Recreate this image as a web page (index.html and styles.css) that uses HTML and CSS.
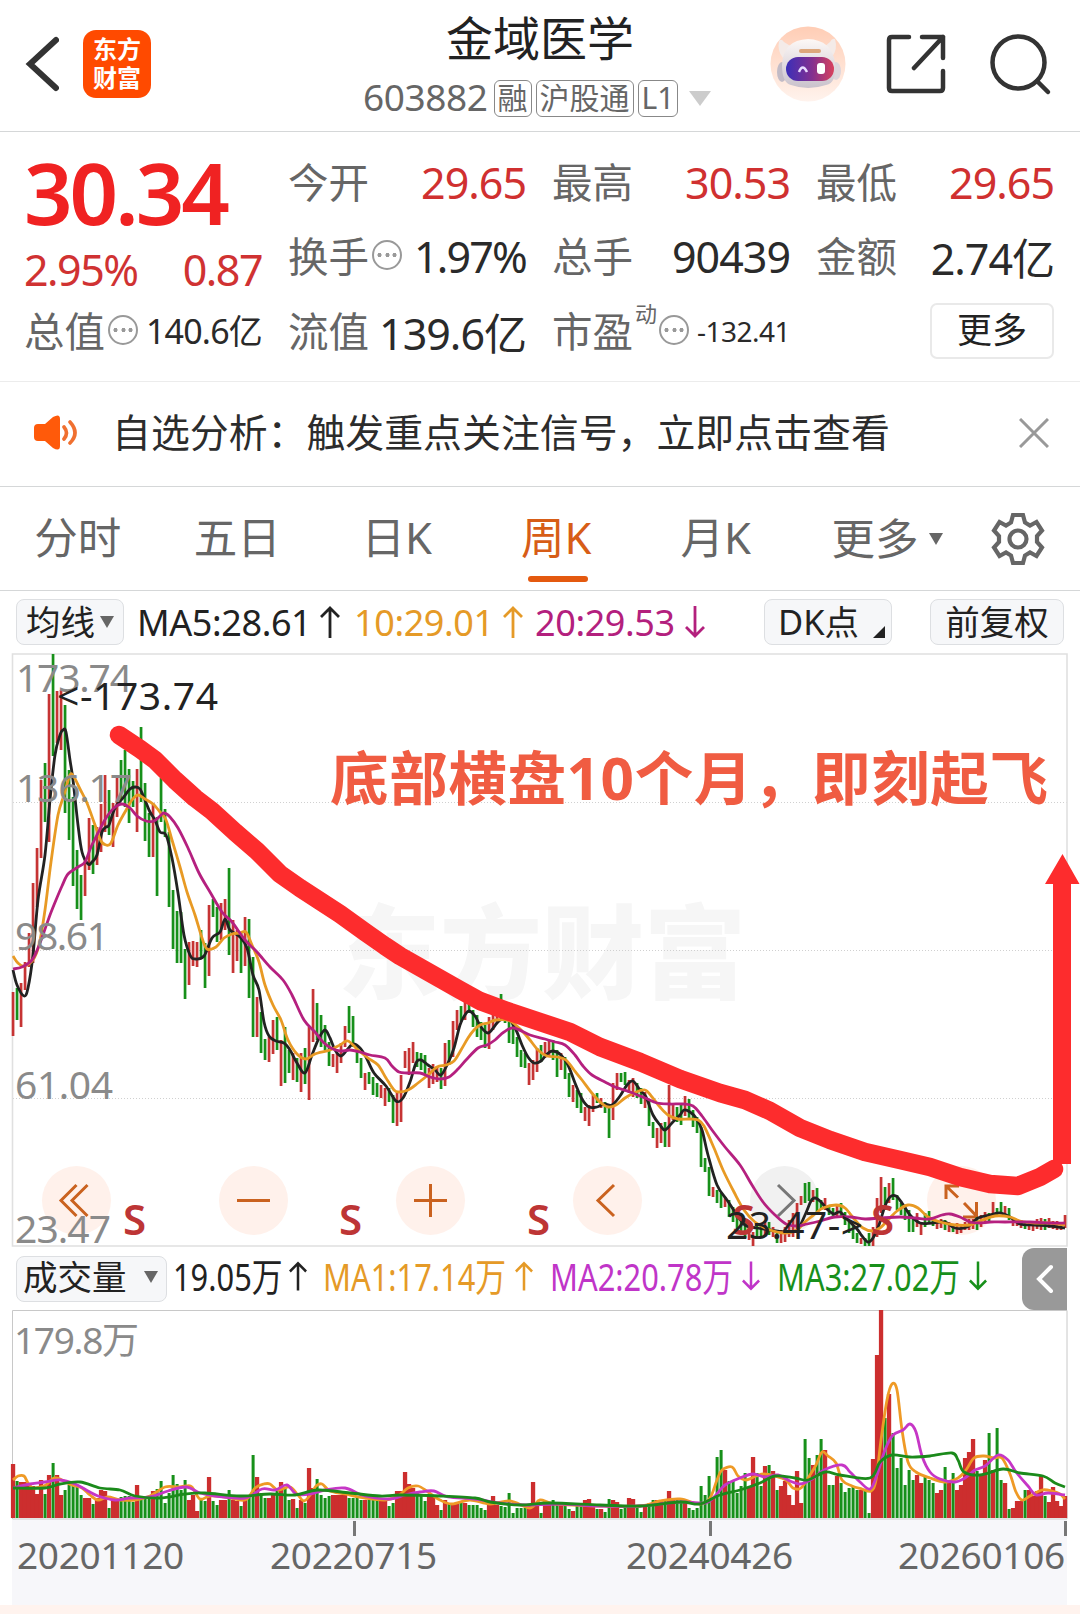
FILE: index.html
```html
<!DOCTYPE html>
<html lang="zh-CN">
	<head>
		<meta charset="utf-8">
		<title>金域医学 603882</title>
		<meta name="viewport" content="width=device-width, initial-scale=1">
		<link rel="stylesheet" href="styles.css">
	</head>
	<body>
		<header id="topbar">
			<div class="top_left">
				<svg class="back" width="34" height="56" viewBox="0 0 34 56"><path d="M31 4 L5 28 L31 52"/></svg>
				<div class="logo">东方<br>财富</div>
			</div>
			<div class="top_title">
				<h1>金域医学</h1>
				<div class="sub">
					<span class="code">603882</span>
					<span class="tag">融</span>
					<span class="tag wide">沪股通</span>
					<span class="tag">L1</span>
					<i class="tri big"></i>
				</div>
			</div>
			<div class="top_right">
				<svg width="76" height="78" viewBox="0 0 76 78">
					<defs>
						<linearGradient id="halo" x1="0" y1="0" x2="0" y2="1"><stop offset="0" stop-color="#ffcdb5"/><stop offset="1" stop-color="#fff3ed"/></linearGradient>
						<linearGradient id="visor" x1="0" y1="0" x2="1" y2="0"><stop offset="0" stop-color="#3b2fb8"/><stop offset=".55" stop-color="#84308f"/><stop offset="1" stop-color="#d8405c"/></linearGradient>
						<linearGradient id="shell" x1="0" y1="0" x2="0" y2="1"><stop offset="0" stop-color="#fdf8f6"/><stop offset="1" stop-color="#c9c2cc"/></linearGradient>
					</defs>
					<circle cx="38" cy="39" r="37.5" fill="url(#halo)"/>
					<path d="M9 16 Q11 13 14 17 L22 22 L13 33 Q7 26 9 16Z M65 14 Q62 13 60 17 L54 22 L62 32 Q68 24 65 14Z" fill="#f4ebe8"/>
					<ellipse cx="12" cy="47" rx="5" ry="10" fill="#c2bbc6"/>
					<ellipse cx="66" cy="46" rx="5" ry="9" fill="#ddd5db"/>
					<path d="M12 40 Q13 15 38 14 Q62 15 65 38 Q67 58 56 60 Q38 66 21 60 Q12 58 12 40Z" fill="url(#shell)"/>
					<rect x="29" y="24" width="22" height="4" rx="2" fill="#dda77c"/>
					<rect x="16" y="32" width="48" height="24" rx="12" fill="url(#visor)"/>
					<path d="M29 47 Q32.500 38 37 47" fill="none" stroke="#e8dcff" stroke-width="2.5"/>
					<rect x="47" y="38" width="8" height="11" rx="3" fill="#fff"/>
				</svg>
				<svg class="line_icon" width="60" height="60" viewBox="0 0 60 60"><path d="M23 3 H6 Q3 3 3 6 V54 Q3 57 6 57 H54 Q57 57 57 54 V37 M36 3 H57 V24 M57 3 L28 34"/></svg>
				<svg class="line_icon find" width="62" height="62" viewBox="0 0 62 62"><circle cx="28.5" cy="28.500" r="26"/><path d="M47 47 L58 58"/></svg>
			</div>
		</header>

		<section id="quote">
			<div class="col main">
				<div class="price">30.34</div>
				<div class="change"><span>2.95%</span><span>0.87</span></div>
				<div class="row"><label>总值</label><i class="info"></i><b class="small">140.6亿</b></div>
			</div>
			<div class="col">
				<div class="row"><label>今开</label><b class="up">29.65</b></div>
				<div class="row"><label>换手</label><i class="info"></i><b class="rate">1.97%</b></div>
				<div class="row"><label>流值</label><b>139.6亿</b></div>
			</div>
			<div class="col">
				<div class="row"><label>最高</label><b class="up">30.53</b></div>
				<div class="row"><label>总手</label><b>90439</b></div>
				<div class="row"><label>市盈</label><sup>动</sup><i class="info"></i><b class="tiny">-132.41</b></div>
			</div>
			<div class="col">
				<div class="row"><label>最低</label><b class="up">29.65</b></div>
				<div class="row"><label>金额</label><b>2.74亿</b></div>
				<div class="row"><span class="more">更多</span></div>
			</div>
		</section>

		<section id="notice">
			<svg width="46" height="36" viewBox="0 0 46 36">
				<path d="M1 13 Q1 9 5 9 H12 L20 2 Q27 -2 27 4 V31 Q27 37 20 33 L12 26 H5 Q1 26 1 22Z" fill="#ff5a0a"/>
				<path d="M31 12 Q36 18 31 24 M37 7 Q47 18 37 28" fill="none" stroke="#f07030" stroke-width="3.6" stroke-linecap="round"/>
			</svg>
			<p>自选分析：触发重点关注信号，立即点击查看</p>
			<svg class="close" width="30" height="30" viewBox="0 0 30 30"><path d="M1 1 L29 29 M29 1 L1 29"/></svg>
		</section>

		<nav id="tabs">
			<a>分时</a>
			<a>五日</a>
			<a>日K</a>
			<a class="on">周K</a>
			<a>月K</a>
			<a class="drop">更多<i class="tri"></i></a>
			<svg width="54" height="54" viewBox="-27 -27 54 54"><path d="M-5 -24 H5 L7 -16.500 L12 -13.500 L18.500 -17 L24 -8.500 L19 -3 V3 L24 8.500 L18.500 17 L12 13.500 L7 16.500 L5 24 H-5 L-7 16.500 L-12 13.500 L-18.500 17 L-24 8.500 L-19 3 V-3 L-24 -8.500 L-18.500 -17 L-12 -13.500 L-7 -16.500 Z"/><circle r="8.500"/></svg>
		</nav>

		<div id="ma_bar" class="bar">
			<span class="btn">均线<i class="tri"></i></span>
			<span class="val m1">MA5:28.61<svg class="arr" viewBox="0 0 20 32"><path d="M10 32 V2 M1 11 L10 2 L19 11"/></svg></span>
			<span class="val m2">10:29.01<svg class="arr" viewBox="0 0 20 32"><path d="M10 32 V2 M1 11 L10 2 L19 11"/></svg></span>
			<span class="val m3">20:29.53<svg class="arr" viewBox="0 0 20 32"><path d="M10 0 V30 M1 21 L10 30 L19 21"/></svg></span>
			<span class="btn dk">DK点<i class="corner"></i></span>
			<span class="btn fq">前复权</span>
		</div>

		<svg id="kline" width="1080" height="594" viewBox="0 653 1080 594">
			<text class="mark" x="338" y="991" textLength="408">东方财富</text>
			<path class="grid" d="M13 802.500 H1067 M13 950.500 H1067 M13 1098.500 H1067"/>
			<path class="frame" d="M12.500 654 H1067 V1246 H12.500 Z"/>
			<g class="pads">
				<circle cx="76.500" cy="1200.500" r="34.500"/>
				<circle cx="253.500" cy="1200.500" r="34.500"/>
				<circle cx="430.500" cy="1200.500" r="34.500"/>
				<circle cx="607.500" cy="1200.500" r="34.500"/>
				<circle class="off" cx="784.500" cy="1200.500" r="34.500"/>
				<circle cx="961.500" cy="1200.500" r="34.500"/>
				<path d="M76.500 1185 L61 1200.500 L76.500 1216 M87.500 1185 L72 1200.500 L87.500 1216"/>
				<path d="M237 1200.500 H270 M414 1200.500 H447 M430.500 1184 V1217"/>
				<path d="M614 1185 L598 1200.500 L614 1216"/>
				<path class="off" d="M778 1185 L794 1200.500 L778 1216"/>
				<path d="M946 1199 V1186 H959 M946 1186 L958 1197.500 M964 1203 L976.500 1216 M976.500 1202 V1217 H963"/>
			</g>
			<g id="candles"></g>
			<g id="ma_lines"></g>
			<g class="scale">
				<text x="16" y="692" textLength="116">173.74</text>
				<text x="16" y="802" textLength="116">136.17</text>
				<text x="15" y="950" textLength="94">98.61</text>
				<text x="15" y="1099" textLength="98">61.04</text>
				<text x="15" y="1243" textLength="96">23.47</text>
			</g>
			<g class="sell">
				<text x="123" y="1235">S</text>
				<text x="339" y="1235">S</text>
				<text x="527" y="1235">S</text>
				<text x="732" y="1235">S</text>
				<text x="871" y="1235">S</text>
			</g>
			<text class="peak" x="57" y="710" textLength="161">&lt;-173.74</text>
			<text class="peak" x="726" y="1239" textLength="137">23.47-&gt;</text>
			<text class="slogan" x="330" y="800" textLength="718">底部横盘10个月，即刻起飞</text>
			<path class="brush" d="M119 735 L140 749 L155 760 L175 780 L195 798 L212 811 L235 832 L257 851 L280 874 L300 888 L320 901 L340 914 L365 932 L385 946 L400 956 L430 973 L460 990 L480 1001 L510 1012 L540 1022 L570 1032 L600 1047 L640 1062 L680 1079 L720 1093 L745 1100 L770 1111 L800 1128 L830 1140 L865 1152 L900 1160 L930 1167 L960 1177 L990 1184 L1018 1186 L1040 1177 L1054 1169"/>
			<path class="arrow" d="M1062.500 854 L1079.500 884 H1071 V1164 H1053 V884 H1045 Z"/>
		</svg>

		<div id="vol_bar" class="bar">
			<span class="btn">成交量<i class="tri"></i></span>
			<span class="val m1"><em>19.05万</em><svg class="arr" viewBox="0 0 20 32"><path d="M10 32 V2 M1 11 L10 2 L19 11"/></svg></span>
			<span class="val m2"><em>MA1:17.14万</em><svg class="arr" viewBox="0 0 20 32"><path d="M10 32 V2 M1 11 L10 2 L19 11"/></svg></span>
			<span class="val m4"><em>MA2:20.78万</em><svg class="arr" viewBox="0 0 20 32"><path d="M10 0 V30 M1 21 L10 30 L19 21"/></svg></span>
			<span class="val m5"><em>MA3:27.02万</em><svg class="arr" viewBox="0 0 20 32"><path d="M10 0 V30 M1 21 L10 30 L19 21"/></svg></span>
			<span class="fold"><svg width="18" height="30" viewBox="0 0 18 30"><path d="M15 3 L3 15 L15 27"/></svg></span>
		</div>

		<svg id="volume" width="1080" height="210" viewBox="0 1310 1080 210">
			<path class="frame dark" d="M12.500 1310.500 H1067 V1519 H12.500 Z"/>
			<text class="vmax" x="14" y="1354" textLength="125">179.8万</text>
			<g id="vbars"></g>
			<g id="vlines"></g>
		</svg>

		<footer id="dates">
			<span>20201120</span>
			<span>20220715</span>
			<span>20240426</span>
			<span>20260106</span>
		</footer>
		<div id="strip"></div>
		<script src="chart.js"></script>
	</body>
</html>
```
FILE: styles.css
```css
* {
	box-sizing: border-box;
}
body {
	margin: 0;
	width: 1080px;
	height: 1614px;
	overflow: hidden;
	background: #fff;
	color: #222;
	font-family: "Noto Sans", "Noto Sans CJK SC", sans-serif;
}
svg {
	display: block;
	flex: none;
}
i, em {
	font-style: normal;
}
.tri {
	border: 7px solid transparent;
	border-top: 12px solid #666;
	border-bottom: 0;
}
.tri.big {
	border-width: 15px 11px 0;
	border-top-color: #ccc;
}

/* header */
#topbar {
	height: 132px;
	border-bottom: 1px solid #d5d7d8;
	display: grid;
	grid-template-columns: 330px 1fr 330px;
}
.top_left {
	display: flex;
	align-items: flex-start;
	padding: 30px 0 0 25px;
}
.back {
	margin: 6px 24px 0 0;
}
.back path {
	fill: none;
	stroke: #333;
	stroke-width: 6;
	stroke-linecap: round;
}
.logo {
	width: 68px;
	height: 68px;
	border-radius: 13px;
	background: #ff4a00;
	color: #fff;
	font-size: 24px;
	font-weight: bold;
	line-height: 29px;
	text-align: center;
	padding-top: 4px;
}
h1 {
	margin: 0;
	font-size: 47px;
	font-weight: normal;
	line-height: 76px;
	text-align: center;
}
.sub {
	display: flex;
	align-items: center;
	height: 38px;
	margin: 3px 0 0 33px;
	color: #666;
}
.code {
	font-size: 37px;
	letter-spacing: -0.4px;
	line-height: 36px;
	margin: -2px 6px 0 0;
}
.tag {
	height: 37px;
	padding: 0 3px;
	margin-right: 4px;
	border: 1px solid #888;
	border-radius: 6px;
	font-size: 30px;
	line-height: 33px;
}
.sub .tri {
	margin-left: 7px;
}
.top_right {
	display: flex;
	align-items: flex-start;
	padding-top: 25px;
}
.top_right svg:first-child {
	margin-left: 20px;
}
.line_icon {
	fill: none;
	stroke: #333;
	stroke-width: 4.500;
	stroke-linecap: round;
	stroke-linejoin: round;
	margin: 9px 0 0 40px;
}
.find {
	margin-left: 44px;
}

/* quote */
#quote {
	height: 250px;
	border-bottom: 1px solid #ececec;
	display: grid;
	grid-template-columns: repeat(4, 238px);
	column-gap: 26px;
	padding: 13px 0 0 24px;
}
.row {
	display: flex;
	align-items: center;
	height: 74.500px;
	white-space: nowrap;
}
.price {
	height: 93px;
	font-size: 85px;
	font-weight: 600;
	line-height: 94px;
	letter-spacing: -3px;
	color: #f02222;
}
.change {
	display: flex;
	justify-content: space-between;
	height: 56px;
	line-height: 63px;
	font-size: 43px;
	letter-spacing: -1.500px;
	color: #d03232;
}
label {
	font-size: 40.500px;
	color: #666;
	margin-top: -4px;
}
.row b {
	margin-left: auto;
	font-weight: normal;
	font-size: 43px;
	letter-spacing: -1px;
	color: #2a2a2a;
}
.row b.up {
	color: #d03030;
}
.row b.rate {
	letter-spacing: -1.800px;
}
.row b.small {
	font-size: 34px;
	letter-spacing: -0.800px;
	margin-top: -3px;
}
.row b.tiny {
	font-size: 28px;
	letter-spacing: -0.500px;
}
.info {
	width: 30px;
	height: 30px;
	margin: -3px 0 0 3px;
	border: 2px solid #999;
	border-radius: 50%;
	background: radial-gradient(circle, #999 1.800px, transparent 2.300px) center / 7px 26px no-repeat,
		radial-gradient(circle, #999 1.800px, transparent 2.300px) 2px center / 7px 26px no-repeat,
		radial-gradient(circle, #999 1.800px, transparent 2.300px) 17px center / 7px 26px no-repeat;
}
sup {
	font-size: 22px;
	color: #666;
	margin: -38px -1px 0 2px;
}
.more {
	margin-left: auto;
	width: 124px;
	height: 56px;
	border: 2px solid #e9e9e9;
	border-radius: 7px;
	font-size: 35px;
	line-height: 50px;
	text-align: center;
}

/* notice */
#notice {
	height: 105px;
	border-bottom: 1px solid #d5d7d8;
	display: flex;
	align-items: center;
	padding: 0 31px 0 33px;
}
#notice > svg:first-child {
	margin-bottom: 2px;
}
#notice p {
	flex: 1;
	margin: 0 0 8px 33px;
	font-size: 38.900px;
	color: #2c2c2c;
}
.close {
	fill: none;
	stroke: #999;
	stroke-width: 3;
	margin-bottom: 2px;
}

/* period tabs */
#tabs {
	height: 104px;
	border-bottom: 1px solid #d5d7d8;
	display: grid;
	grid-template-columns: repeat(5, 159.500px) 193px 54px;
	align-items: center;
	margin-left: -2px;
}
#tabs a {
	position: relative;
	height: 103px;
	line-height: 101px;
	font-size: 43.500px;
	color: #666;
	text-align: center;
}
#tabs .on {
	color: #d75d17;
}
#tabs .on:after {
	content: "";
	position: absolute;
	left: 51px;
	bottom: 8px;
	width: 60px;
	height: 6px;
	border-radius: 3px;
	background: #e4590f;
}
#tabs .drop {
	display: flex;
	align-items: center;
	padding-left: 36px;
}
.drop .tri {
	margin-left: 10px;
}
#tabs svg {
	margin-left: 2px;
	fill: none;
	stroke: #666;
	stroke-width: 4.200;
}

/* indicator rows */
.bar {
	display: flex;
	align-items: center;
	height: 62px;
	padding-left: 16px;
	white-space: nowrap;
}
.btn {
	display: flex;
	align-items: center;
	height: 46px;
	padding: 0 9px;
	border: 1px solid #dddfe2;
	border-radius: 8px;
	background: #f6f7f9;
	font-size: 34.500px;
	line-height: 40px;
}
.btn .tri {
	margin-left: 5px;
}
.val {
	display: flex;
	align-items: center;
	font-size: 36px;
	letter-spacing: -0.400px;
}
.arr {
	width: 20px;
	height: 32px;
	margin-left: auto;
	fill: none;
	stroke: currentColor;
	stroke-width: 2.800;
}
.m1 { color: #222; }
.m2 { color: #e59a27; }
.m3 { color: #b3207d; }
.m4 { color: #c035c8; }
.m5 { color: #18901b; }
#ma_bar .m1 { width: 203px; margin-left: 13px; }
#ma_bar .m2 { width: 169px; margin-left: 14px; }
#ma_bar .m3 { width: 170px; margin-left: 12px; }
.dk {
	width: 128px;
	margin-left: 59px;
	padding: 0 6px 0 13px;
	justify-content: space-between;
}
.corner {
	align-self: flex-end;
	margin-bottom: 6px;
	border-left: 12px solid transparent;
	border-bottom: 12px solid #222;
}
.fq {
	margin-left: 38px;
	width: 134px;
	justify-content: center;
}

/* price chart */
#kline {
	font-size: 39px;
}
.frame {
	fill: none;
	stroke: #e0e0e0;
	stroke-width: 1.600;
}
.frame.dark {
	stroke: #c8c8c8;
	stroke-width: 1;
}
.grid {
	stroke: #d0d0d0;
	stroke-dasharray: 1 2;
}
.mark {
	font-size: 102px;
	font-weight: 900;
	fill: #f6f6f6;
}
.pads circle {
	fill: #fff1eb;
}
.pads circle.off {
	fill: #f1f1f1;
}
.pads path {
	fill: none;
	stroke: #ca621f;
	stroke-width: 3;
}
.pads path.off {
	stroke: #777;
}
.scale, .vmax {
	fill: #8a8a8a;
}
.peak {
	fill: #222;
}
.sell {
	font-size: 42px;
	font-weight: 600;
	fill: #bd3535;
}
.slogan {
	font-size: 58.500px;
	font-weight: bold;
	fill: #f05c42;
}
.brush {
	fill: none;
	stroke: #fd2c2d;
	stroke-width: 18.500;
	stroke-linecap: round;
	stroke-linejoin: round;
}
.arrow {
	fill: #fd2c2d;
}
#kline .line, #volume .line {
	fill: none;
	stroke-width: 2.800;
}

/* volume */
#vol_bar {
	height: 63px;
	padding-right: 13px;
}
#vol_bar .btn {
	width: 151px;
	padding: 0 8px 3px 6px;
	justify-content: space-between;
}
#vol_bar .val {
	font-size: 39px;
	letter-spacing: 0;
	line-height: 56px;
	padding-bottom: 5px;
}
#vol_bar em {
	width: 0;
	transform: scaleX(.79);
	transform-origin: 0 50%;
}
#vol_bar .arr { width: 18px; }
#vol_bar .m1 { width: 134px; margin-left: 6px; }
#vol_bar .m2 { width: 210px; margin-left: 16px; }
#vol_bar .m4 { width: 210px; margin-left: 17px; }
#vol_bar .m5 { width: 210px; margin-left: 17px; }
.fold {
	width: 45px;
	height: 62px;
	margin-left: auto;
	display: flex;
	align-items: center;
	justify-content: center;
	background: #999;
	border-radius: 12px 0 0 12px;
}
.fold path {
	fill: none;
	stroke: #fff;
	stroke-width: 4;
	stroke-linecap: round;
}
.vmax {
	font-size: 37px;
}

/* date axis */
#dates {
	display: grid;
	grid-template-columns: 253px 356px 1fr 169px;
	margin: 0 13px 0 12px;
	height: 85px;
	background:
		linear-gradient(#777, #777) 341px 1px / 3px 15px no-repeat,
		linear-gradient(#777, #777) 697px 1px / 3px 15px no-repeat,
		linear-gradient(#777, #777) 1052px 1px / 3px 15px no-repeat,
		#f7f7fa;
	color: #666;
	font-size: 37px;
	letter-spacing: -0.300px;
	line-height: 70px;
	padding-left: 5px;
}
#strip {
	height: 9px;
	background: #fff3ee;
}
```
FILE: chart.js
```js
var NS = "http://www.w3.org/2000/svg";
var RED = "#c63434", GREEN = "#17901a";

// one entry per week: direction, top, bottom
var candles = "R992-1036 G988-1020 R983-1027 R962-990 R933-967 R883-963 R848-907 R780-858 G763-822 R694-842 G654-756 R691-743 R690-750 G705-813 G770-840 G797-886 G850-909 G875-920 R858-896 R818-870 " +
	"G825-874 R827-865 R804-852 R775-832 G790-835 R803-847 R776-817 G760-800 G750-807 G769-823 G781-807 R769-832 G727-802 G783-841 G813-857 R803-857 G817-896 G778-822 G809-837 G832-907 " +
	"G890-949 G911-963 G912-963 G949-999 R942-985 R941-966 R942-967 G930-958 G943-988 R905-976 G899-917 G907-942 R903-940 R899-930 G868-955 R920-973 R930-961 G933-973 R917-966 G919-998 " +
	"G957-1037 R997-1037 G1012-1053 G1039-1060 R1037-1062 R1020-1054 G1017-1050 R1040-1086 G1027-1083 G1050-1073 R1053-1080 G1058-1082 R1053-1092 G1048-1084 R1027-1100 R989-1042 G1003-1040 G1015-1047 G1025-1050 G1042-1066 " +
	"R1054-1067 R1053-1073 R1043-1063 R1026-1047 G1006-1033 G1016-1047 G1045-1063 G1058-1078 R1073-1090 G1072-1084 G1077-1095 G1083-1097 R1085-1098 R1088-1106 G1088-1102 G1095-1123 R1092-1126 R1075-1122 R1051-1068 R1048-1075 " +
	"R1042-1063 G1052-1067 G1053-1070 G1055-1075 R1068-1088 R1064-1084 R1066-1082 G1068-1089 R1043-1086 G1040-1065 R1021-1057 R1010-1030 G1006-1022 R1000-1020 G987-1013 G1010-1027 G1015-1037 G1022-1040 G1025-1048 R1017-1049 " +
	"R1013-1030 R1007-1023 G994-1020 G1003-1023 G1005-1043 G1023-1044 G1037-1057 G1050-1067 G1053-1068 R1063-1085 R1060-1080 R1048-1072 G1045-1062 R1042-1058 R1041-1057 G1040-1060 G1050-1077 R1053-1070 G1057-1079 G1073-1097 " +
	"R1085-1102 G1090-1108 G1093-1113 R1107-1121 R1105-1126 R1095-1112 G1093-1103 R1098-1108 G1102-1113 G1107-1138 R1083-1120 R1073-1090 G1073-1082 G1072-1085 R1080-1093 R1078-1097 G1083-1098 G1088-1104 R1092-1108 G1100-1126 " +
	"G1122-1138 R1128-1148 R1123-1143 G1122-1147 R1085-1147 R1105-1120 G1107-1122 G1105-1125 R1096-1116 G1099-1118 G1110-1127 G1117-1133 G1127-1167 G1158-1172 G1167-1196 R1187-1197 G1190-1203 G1193-1208 R1197-1207 G1200-1217 " +
	"G1207-1222 G1212-1230 G1217-1233 G1222-1238 R1227-1240 R1232-1246 G1225-1238 G1223-1237 R1222-1235 G1222-1235 R1227-1237 G1230-1243 R1230-1243 R1227-1242 R1220-1237 R1213-1237 R1203-1230 R1196-1205 G1183-1203 G1182-1201 " +
	"R1190-1202 G1188-1213 G1200-1210 R1198-1210 G1207-1215 G1208-1218 R1205-1217 G1203-1217 G1212-1225 G1220-1233 G1225-1239 G1233-1243 R1238-1244 G1238-1246 G1233-1246 R1227-1246 R1198-1237 R1177-1213 G1187-1210 R1183-1203 " +
	"G1178-1200 G1195-1210 G1203-1215 G1207-1220 G1210-1232 G1217-1232 R1213-1227 R1222-1235 G1213-1227 G1211-1223 G1218-1226 R1220-1229 R1219-1228 G1220-1230 R1222-1232 G1224-1232 R1223-1234 R1225-1233 R1222-1230 R1219-1230 " +
	"R1219-1229 G1217-1230 R1215-1227 R1212-1222 G1213-1222 R1202-1217 G1208-1217 G1202-1213 R1206-1216 G1208-1220 R1218-1226 R1219-1226 R1220-1228 G1221-1229 R1222-1230 R1222-1231 R1219-1229 R1218-1230 G1219-1230 R1218-1228 " +
	"R1221-1229 R1221-1230 R1222-1230 R1215-1228";

var vols = [54,37,36,36,32,32,24,38,24,43,55,43,23,28,33,33,32,23,20,20,14,20,28,27,10,18,18,21,22,22,16,33,20,20,20,27,29,37,15,25,
	43,34,28,38,18,23,7,18,17,41,17,13,18,18,28,18,17,12,18,22,63,41,25,20,20,25,27,36,30,18,19,10,18,15,50,30,39,23,20,22,
	23,23,23,23,20,20,22,18,18,18,18,18,18,18,12,15,27,27,46,34,30,25,23,17,22,22,13,8,18,15,15,15,15,15,13,13,13,10,8,13,
	22,13,12,11,25,5,10,10,10,12,36,12,5,13,14,18,16,16,16,9,7,13,13,18,19,13,9,9,6,19,18,16,9,10,20,19,10,6,12,15,
	18,18,17,18,27,18,19,18,15,10,8,10,32,23,42,20,61,68,48,37,37,25,32,45,30,61,45,32,52,53,47,28,32,37,23,13,47,15,79,60,
	53,63,79,68,33,33,42,35,26,30,31,28,28,27,5,59,163,208,100,124,85,50,60,33,48,38,43,35,41,38,35,25,28,51,37,45,28,33,60,66,
	79,47,42,58,85,48,90,38,35,9,10,17,17,28,28,22,27,42,22,16,31,17,12,22];

var ma5 = "13,970 17,985 24,996 28,988 33,955 38,900 45,855 50,800 55,755 60,735 63,730 66,732 70,760 73,780 78,825 82,852 88,864 92,862 97,855 102,832 106,827 109,825 115,808 123,798 130,789 135,787 140,789 145,800 150,812 155,820 160,832 166,835 172,858 178,893 184,935 190,955 195,959 204,956 212,938 220,932 225,919 230,930 240,937 247,948 253,975 259,990 264,1022 269,1036 276,1041 284,1043 290,1050 297,1063 305,1073 312,1055 319,1038 325,1030 330,1038 335,1050 341,1056 347,1050 353,1044 360,1048 366,1057 374,1073 386,1086 396,1101 403,1098 410,1082 416,1063 421,1060 428,1065 435,1070 441,1075 448,1063 454,1048 460,1025 465,1015 469,1011 475,1016 481,1027 488,1033 494,1027 499,1021 508,1018 516,1030 522,1045 528,1057 534,1063 541,1061 547,1054 553,1051 561,1055 568,1065 575,1083 582,1099 589,1107 597,1107 604,1104 612,1105 620,1096 627,1085 633,1081 640,1090 646,1097 653,1115 660,1125 665,1130 672,1123 680,1115 684,1110 690,1112 696,1118 702,1130 708,1155 717,1185 727,1200 735,1212 745,1225 757,1228 770,1230 785,1232 797,1230 805,1215 811,1201 815,1198 821,1202 828,1210 834,1214 840,1212 848,1220 857,1229 862,1236 868,1242 873,1238 879,1225 885,1206 890,1197 896,1196 902,1203 910,1215 920,1223 932,1223 945,1222 955,1228 967,1227 978,1218 990,1215 1000,1213 1010,1217 1020,1224 1035,1225 1050,1226 1065,1228";
var ma10 = "13,956 18,963 24,966 33,960 39,945 45,910 51,862 58,815 64,795 70,775 74,777 80,789 87,803 95,825 101,841 106,845 111,843 118,825 125,812 132,800 138,795 145,799 153,804 160,812 166,820 172,840 180,867 187,892 195,915 202,938 207,949 216,947 224,938 232,934 240,933 246,932 252,945 259,962 265,985 273,1005 281,1020 288,1040 297,1054 306,1059 315,1054 330,1050 340,1045 348,1041 358,1050 368,1058 378,1065 386,1078 394,1090 399,1092 408,1090 418,1083 428,1075 437,1067 446,1065 454,1061 461,1050 468,1038 474,1030 480,1025 488,1023 496,1020 510,1021 522,1031 530,1040 538,1050 547,1056 558,1057 566,1060 574,1070 582,1080 591,1092 600,1102 608,1107 616,1105 625,1098 634,1093 645,1090 652,1097 660,1107 668,1115 678,1119 690,1119 698,1120 704,1126 714,1148 723,1170 734,1192 744,1210 755,1222 770,1230 785,1233 797,1230 805,1222 815,1214 823,1208 836,1205 845,1208 855,1220 863,1228 872,1231 880,1228 888,1220 897,1211 908,1205 918,1208 928,1217 940,1222 955,1225 970,1225 980,1221 995,1216 1010,1217 1020,1221 1035,1223 1050,1223 1065,1225";
var ma20 = "13,969 22,967 32,960 38,948 44,932 50,915 56,900 62,886 68,874 78,867 85,862 91,847 98,833 106,818 114,808 122,804 130,808 137,816 146,821 154,821 160,816 164,813 170,817 178,828 188,848 199,873 210,892 222,912 232,922 245,940 257,952 270,967 283,980 292,995 304,1020 315,1032 323,1042 331,1048 340,1051 350,1050 360,1052 370,1055 385,1058 392,1066 399,1072 407,1073 420,1073 430,1077 440,1079 449,1077 458,1069 466,1060 478,1048 487,1045 495,1040 504,1032 514,1028 530,1035 545,1039 555,1042 565,1045 575,1055 583,1066 592,1075 605,1082 615,1087 630,1092 645,1098 657,1103 670,1104 683,1104 693,1106 702,1116 712,1130 725,1147 740,1165 752,1185 763,1202 775,1215 786,1224 797,1226 807,1224 820,1221 835,1217 850,1217 865,1219 880,1218 900,1217 915,1218 930,1219 942,1215 950,1214 960,1217 970,1222 980,1223 990,1222 1005,1222 1030,1222 1050,1223 1065,1223";
var vma1 = "13,1480 18,1476 24,1476 28,1483 33,1488 40,1487 46,1485 54,1478 62,1480 72,1485 82,1488 90,1495 98,1500 108,1497 120,1500 135,1500 150,1496 165,1487 178,1487 186,1486 192,1487 200,1499 210,1496 225,1497 245,1500 255,1488 264,1484 270,1484 278,1490 290,1487 298,1495 304,1501 311,1494 316,1486 322,1484 330,1491 345,1494 365,1498 385,1500 398,1496 408,1488 418,1486 428,1492 440,1500 452,1504 470,1500 490,1504 510,1501 530,1508 540,1500 555,1504 600,1506 640,1506 660,1501 680,1499 700,1504 710,1498 717,1480 722,1470 732,1467 738,1476 746,1480 756,1476 764,1474 775,1476 786,1480 793,1488 801,1488 810,1475 816,1465 822,1452 828,1456 836,1463 842,1480 852,1486 862,1489 871,1491 876,1480 881,1440 887,1400 892,1384 897,1390 902,1430 908,1462 916,1472 930,1478 945,1482 958,1478 966,1470 974,1458 984,1456 994,1458 1002,1458 1010,1474 1016,1492 1022,1500 1030,1496 1042,1490 1052,1491 1060,1494 1065,1499";
var vma2 = "13,1488 30,1484 45,1482 60,1480 75,1484 88,1491 98,1496 115,1500 130,1498 150,1497 168,1491 186,1487 200,1493 215,1496 245,1498 262,1489 275,1490 287,1485 296,1494 310,1494 325,1490 345,1488 365,1496 390,1499 405,1495 420,1492 434,1491 448,1497 475,1499 500,1503 525,1505 560,1504 600,1506 640,1506 680,1502 705,1503 715,1496 725,1485 740,1478 753,1474 765,1477 778,1475 790,1481 800,1484 812,1479 824,1470 842,1465 850,1472 860,1482 870,1489 877,1475 885,1450 893,1435 903,1430 910,1424 916,1432 922,1456 930,1472 940,1479 955,1482 965,1478 975,1470 985,1466 998,1455 1008,1460 1016,1472 1028,1486 1036,1495 1048,1493 1065,1495";
var vma3 = "13,1488 45,1488 60,1484 80,1482 100,1488 120,1490 135,1496 160,1498 185,1494 205,1493 240,1496 270,1494 295,1495 318,1490 350,1493 380,1496 400,1495 440,1496 475,1498 490,1502 520,1505 550,1503 600,1505 640,1506 680,1502 700,1504 720,1495 740,1490 760,1483 775,1476 795,1478 808,1480 825,1472 840,1475 870,1478 880,1462 892,1455 910,1457 930,1456 952,1453 958,1460 964,1472 980,1475 1003,1469 1020,1473 1043,1476 1055,1483 1065,1487";

function add(parent, name, attrs) {
	var el = document.createElementNS(NS, name);
	for (var k in attrs) {
		el.setAttribute(k, attrs[k]);
	}
	document.getElementById(parent).appendChild(el);
}

// smooth curve through the points
function curve(parent, str, color) {
	var p = str.split(" ").map(function(s) { return s.split(",").map(Number); });
	var d = "M" + p[0];
	for (var i = 0; i < p.length - 1; i++) {
		var a = p[i - 1] || p[i], b = p[i], c = p[i + 1], e = p[i + 2] || c;
		d += "C" + [b[0] + (c[0] - a[0]) / 6, b[1] + (c[1] - a[1]) / 6,
			c[0] - (e[0] - b[0]) / 6, c[1] - (e[1] - b[1]) / 6, c[0], c[1]].join(" ");
	}
	add(parent, "path", {d: d, stroke: color, "class": "line"});
}

candles.split(" ").forEach(function(s, i) {
	var up = s[0] == "R";
	var y = s.slice(1).split("-").map(Number);
	var x = 13 + i * 4;
	add("candles", "rect", {x: x - 1.3, y: y[0], width: 2.7, height: y[1] - y[0], fill: up ? RED : GREEN});
	add("vbars", "rect", {x: up ? x - 2.1 : x - 1.4, y: 1518 - vols[i], width: up ? 4.3 : 3, height: vols[i], fill: up ? "#cc2e2e" : GREEN});
});

curve("ma_lines", ma5, "#222");
curve("ma_lines", ma10, "#e89a24");
curve("ma_lines", ma20, "#b5207f");
curve("vlines", vma1, "#ef9a26");
curve("vlines", vma2, "#c636c6");
curve("vlines", vma3, "#1b8a1b");
```
